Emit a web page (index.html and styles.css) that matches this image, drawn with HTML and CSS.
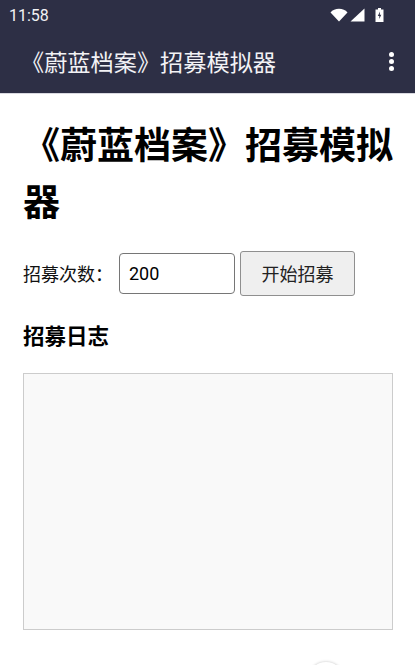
FILE: index.html
```html
<!DOCTYPE html>
<html lang="zh-CN">
<head>
<meta charset="utf-8">
<title>《蔚蓝档案》招募模拟器</title>
<link rel="stylesheet" href="styles.css">
</head>
<body>
<header class="chrome">
  <div class="status">
    <span class="clock">11:58</span>
    <span class="status-icons">
      <svg class="ic-wifi" width="18" height="14" viewBox="0 0 18 14"><path d="M0.500 4.500C2.500 2 5.500 0.800 9 0.800s6.500 1.200 8.500 3.700L9 13.500z" fill="#fff"/></svg>
      <svg class="ic-signal" width="15" height="14" viewBox="0 0 15 14"><path d="M14.500 0.500V13.500H0.500z" fill="#fff"/></svg>
      <svg class="ic-batt" width="9" height="14" viewBox="0 0 9 14"><path fill-rule="evenodd" d="M3 0h3v1.500h2.500V14H0.500V1.500H3zM5 3.500L2.800 8h1.500v3L6.300 6.800H4.800z" fill="#fff"/></svg>
    </span>
  </div>
  <div class="appbar">
    <span class="app-title">《蔚蓝档案》招募模拟器</span>
    <span class="more" aria-label="更多"><i></i><i></i><i></i></span>
  </div>
</header>
<main class="content">
  <h1 class="title">《蔚蓝档案》招募模拟器</h1>
  <div class="controls">
    <label class="count-label" for="count">招募次数：</label>
    <input class="count-input" id="count" type="text" value="200">
    <button class="start" type="button">开始招募</button>
  </div>
  <h2 class="log-title">招募日志</h2>
  <div class="log"></div>
</main>
<div class="fab"></div>
</body>
</html>
```

FILE: styles.css
```css
* { box-sizing: border-box; }
html, body { margin: 0; height: 100%; }
body {
  position: relative;
  overflow: hidden;
  background: #fff;
  color: #000;
  font-family: Roboto, "Noto Sans CJK SC", sans-serif;
}
.chrome { background: #2d2f45; color: #fff; height: 94px; border-bottom: 1px solid #d9d9e0; }
.status {
  height: 31px;
  padding: 0 31px 0 9px;
  display: flex;
  align-items: center;
  justify-content: space-between;
}
.clock { font-size: 16px; color: #f2f2f4; }
.status-icons { display: flex; align-items: center; gap: 2px; margin-bottom: 2px; }
.ic-signal { margin-right: 8px; }
.appbar {
  height: 60px;
  padding: 0 21px;
  display: flex;
  align-items: center;
  justify-content: space-between;
}
.app-title { font-size: 23.2px; color: #f2f2f5; }
.more { display: flex; flex-direction: column; gap: 2px; }
.more i { display: block; width: 5px; height: 5px; border-radius: 50%; background: #fff; }
.content { padding: 0 22px 0 23px; }
.title {
  margin: 24px 0 0;
  font-size: 37px;
  line-height: 57px;
  font-weight: 700;
}
.controls { display: flex; align-items: center; margin-top: 17px; height: 48px; }
.count-label { font-size: 18px; width: 96px; flex: none; color: #111; }
.count-input {
  width: 116px;
  height: 41px;
  margin: 0 5px 0 0;
  padding: 0 9px;
  border: 1px solid #767676;
  border-radius: 4px;
  font: 18px Roboto, sans-serif;
  color: #000;
}
.start {
  width: 115px;
  height: 45px;
  padding: 0;
  border: 1px solid #8f8f8f;
  border-radius: 3px;
  background: #efefef;
  font: 18px Roboto, "Noto Sans CJK SC", sans-serif;
  color: #222;
}
.log-title { margin: 25px 0 0; font-size: 21.5px; line-height: 30px; font-weight: 700; }
.log {
  margin-top: 21px;
  height: 257px;
  border: 1px solid #ccc;
  background: #f9f9f9;
}
.fab {
  position: absolute;
  left: 308px;
  top: 662px;
  width: 36px;
  height: 36px;
  border-radius: 50%;
  background: #fff;
  box-shadow: 0 0 3px rgba(0,0,0,.25);
}
```
